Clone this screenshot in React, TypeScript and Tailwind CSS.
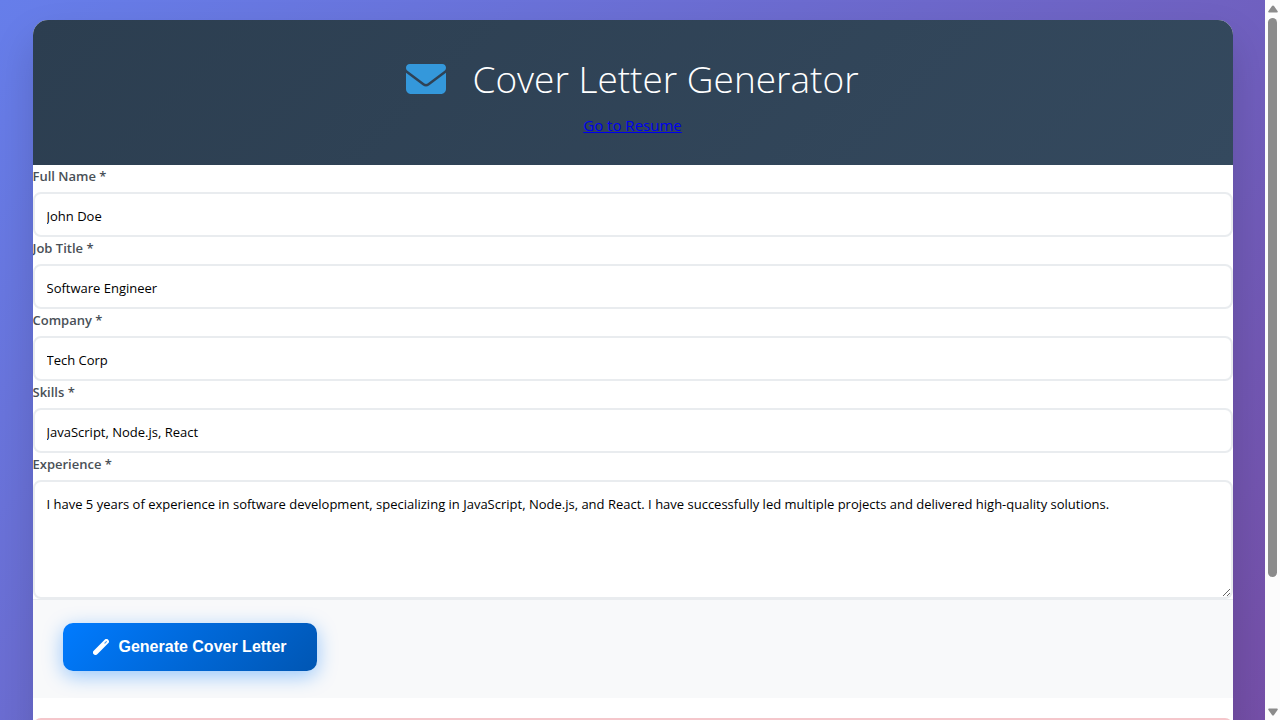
import type { ReactNode } from "react";
import { FaEnvelope } from "react-icons/fa6";

const control =
  "block w-full rounded-lg border-2 border-[#e9ecef] bg-white px-3 text-[13px] text-black outline-none focus:border-[#3498db]";

function Field({ id, label, children }: { id: string; label: string; children: ReactNode }) {
  return (
    <div>
      <label htmlFor={id} className="mb-1 block text-[13px] leading-[23px] font-semibold text-[#495057]">
        {label}
      </label>
      {children}
    </div>
  );
}

const fields = [
  { id: "fullName", label: "Full Name *", value: "John Doe" },
  { id: "jobTitle", label: "Job Title *", value: "Software Engineer" },
  { id: "company", label: "Company *", value: "Tech Corp" },
  { id: "skills", label: "Skills *", value: "JavaScript, Node.js, React" },
];

function WandIcon() {
  return (
    <svg width="16" height="16" viewBox="0 0 16 16" fill="none" strokeLinecap="round" aria-hidden="true">
      <path d="M2.5 13.4 L13.4 2.5" stroke="white" strokeWidth="5" />
      <path d="M11.9 4.1 L13.4 2.6" stroke="#4da0f5" strokeWidth="1.2" />
    </svg>
  );
}

function ScrollRail() {
  return (
    <div aria-hidden="true" className="flex w-[15px] shrink-0 flex-col items-center bg-[#fcfcfc] pt-[5px] pb-1">
      <svg width="10" height="8" viewBox="0 0 10 8" fill="#8b8b8b">
        <path d="M5 0.4 Q5.6 0.4 6 1 L9.7 6.2 Q10 7.4 9 7.5 H1 Q0 7.4 0.3 6.2 L4 1 Q4.4 0.4 5 0.4Z" />
      </svg>
      <div className="mt-[5px] flex w-full flex-1 justify-center">
        <div className="h-[81%] w-[9px] rounded-full bg-[#8b8b8b]" />
      </div>
      <svg width="10" height="8" viewBox="0 0 10 8" fill="#8b8b8b" className="rotate-180">
        <path d="M5 0.4 Q5.6 0.4 6 1 L9.7 6.2 Q10 7.4 9 7.5 H1 Q0 7.4 0.3 6.2 L4 1 Q4.4 0.4 5 0.4Z" />
      </svg>
    </div>
  );
}

export default function App() {
  return (
    <div className="flex h-screen overflow-hidden font-['Segoe_UI','Open_Sans',sans-serif]">
      <div className="min-w-0 flex-1 overflow-hidden">
        <div className="bg-linear-[135deg,#667eea_0%,#764ba2_100%] px-5 py-5">
          <main className="mx-auto max-w-[1200px] overflow-hidden rounded-[15px] bg-white shadow-[0_20px_40px_rgba(0,0,0,0.15)]">
            <header className="bg-linear-[135deg,#2c3e50,#34495e] px-[30px] pt-[30px] pb-7 text-center text-white">
              <h1 className="flex items-center justify-center gap-[26px] text-[37px] leading-[58px] font-light">
                <FaEnvelope className="size-10 text-[#3498db]" />
                Cover Letter Generator
              </h1>
              <a href="#resume" className="mx-auto mt-[5px] block w-fit text-[15px] leading-6 text-[#0000ee] underline">
                Go to Resume
              </a>
            </header>
            <form onSubmit={(e) => e.preventDefault()}>
              {fields.map((f) => (
                <Field key={f.id} id={f.id} label={f.label}>
                  <input id={f.id} type="text" defaultValue={f.value} className={`${control} h-[45px] pt-[2px]`} />
                </Field>
              ))}
              <Field id="experience" label="Experience *">
                <textarea
                  id="experience"
                  defaultValue="I have 5 years of experience in software development, specializing in JavaScript, Node.js, and React. I have successfully led multiple projects and delivered high-quality solutions."
                  className={`${control} h-[119px] resize-y py-3 leading-5`}
                />
              </Field>
              <div className="border-t border-[#e9ecef] bg-[#f8f9fa] px-[30px] pt-[23px] pb-[27px]">
                <button
                  type="submit"
                  className="flex h-12 items-center gap-[10px] rounded-[10px] bg-linear-[135deg,#007bff,#0056b3] px-[30px] font-['Liberation_Sans',sans-serif] text-base font-bold text-white shadow-[0_5px_20px_rgba(0,123,255,0.4)]"
                >
                  <WandIcon />
                  Generate Cover Letter
                </button>
              </div>
            </form>
            <div className="mt-5 mb-5 h-[130px] rounded-lg border-2 border-[#f5c6cb] bg-[#f8d7da]" />
          </main>
        </div>
      </div>
      <ScrollRail />
    </div>
  );
}
